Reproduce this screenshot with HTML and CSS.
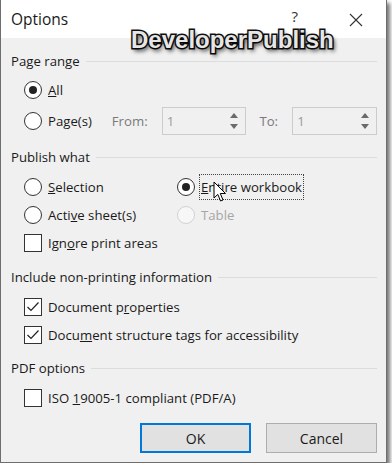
FILE: index.html
```html
<!DOCTYPE html>
<html lang="en">
<head>
  <meta charset="UTF-8" />
  <title>Options</title>
  <link rel="stylesheet" href="styles.css">
</head>
<body>

  <div class="dialog">
    <div class="titlebar">
      <span class="title">Options</span>
      <span class="help">?</span>
      <svg class="close" width="14" height="14" viewBox="0 0 14 14">
        <path d="M1 1 L13 13 M13 1 L1 13" stroke="#333" stroke-width="1.1" fill="none"/>
      </svg>
    </div>

    <div class="content">
      <!-- Page range -->
      <div class="group-label"><span>Page range</span><div class="line"></div></div>
      <div class="row r-all">
        <span class="radio checked"></span><span><u>A</u>ll</span>
      </div>
      <div class="row r-pages">
        <span class="radio"></span><span class="pages-text">Pa<u>g</u>e(s)</span>
        <span class="muted from">From:</span>
        <div class="spin"><span class="spin-val">1</span><div class="spin-btns"><span class="up"></span><span class="down"></span></div></div>
        <span class="muted to">To:</span>
        <div class="spin"><span class="spin-val">1</span><div class="spin-btns"><span class="up"></span><span class="down"></span></div></div>
      </div>

      <!-- Publish what -->
      <div class="group-label g-publish"><span>Publish what</span><div class="line"></div></div>
      <div class="grid">
        <div class="row"><span class="radio"></span><span><u>S</u>election</span></div>
        <div class="row"><span class="radio checked"></span><span class="focus"><u>E</u>ntire workbook</span></div>
        <div class="row"><span class="radio"></span><span>Acti<u>v</u>e sheet(s)</span></div>
        <div class="row disabled"><span class="radio"></span><span>Table</span></div>
      </div>
      <div class="row">
        <span class="check"></span><span>Ign<u>o</u>re print areas</span>
      </div>

      <!-- Include non-printing information -->
      <div class="group-label g-include"><span>Include non-printing information</span><div class="line"></div></div>
      <div class="row r-first">
        <span class="check on"><svg width="14" height="12" viewBox="0 0 14 12"><path d="M1.5 6 L5 9.5 L12.5 1.5" stroke="#222" stroke-width="1.2" fill="none"/></svg></span>
        <span>Document p<u>r</u>operties</span>
      </div>
      <div class="row">
        <span class="check on"><svg width="14" height="12" viewBox="0 0 14 12"><path d="M1.5 6 L5 9.5 L12.5 1.5" stroke="#222" stroke-width="1.2" fill="none"/></svg></span>
        <span>Docu<u>m</u>ent structure tags for accessibility</span>
      </div>

      <!-- PDF options -->
      <div class="group-label g-pdf"><span>PDF options</span><div class="line"></div></div>
      <div class="row r-first">
        <span class="check"></span><span>ISO <u>1</u>9005-1 compliant (PDF/A)</span>
      </div>

      <div class="buttons">
        <button class="btn default">OK</button>
        <button class="btn">Cancel</button>
      </div>
    </div>

    <div class="watermark">DeveloperPublish</div>
    <svg class="cursor" width="14" height="22" viewBox="0 0 14 22">
      <path d="M1 1 L1 17 L4.8 13.4 L7.6 20 L10 19 L7.3 12.5 L12.5 12.5 Z" fill="#fff" stroke="#000" stroke-width="1" stroke-linejoin="round"/>
    </svg>
  </div>

</body>
</html>
```

FILE: styles.css
```css
body {
  margin: 0;
  padding: 0;
  background: #ffffff;
  font-family: 'Open Sans', 'Noto Sans', sans-serif;
  color: #1a1a1a;
}

.dialog {
  position: relative;
  width: 385px;
  height: 462px;
  background-color: #f0f0f0;
  border: 1px solid #6e6e6e;
  border-top: none;
  box-shadow: 3px 3px 4px rgba(0, 0, 0, 0.55);
  overflow: visible;
}

.titlebar {
  height: 38px;
  background-color: #ffffff;
  display: flex;
  align-items: center;
  padding: 0 0 0 10px;
}

.title {
  font-size: 15.5px;
  flex: 1;
}

.help {
  font-size: 15px;
  color: #333;
  margin-right: 51px;
  margin-top: -6px;
}

.close {
  margin-right: 23px;
  margin-top: 2px;
}

.content {
  padding: 14px 9px 0 10px;
  font-size: 13.2px;
}

.group-label {
  height: 18px;
  display: flex;
  align-items: center;
}

.group-label .line {
  flex: 1;
  height: 1px;
  background-color: #dcdcdc;
  margin-left: 6px;
}

.g-publish { margin-top: 13px; }
.g-include { margin-top: 11px; }
.g-pdf { margin-top: 10px; }

.row {
  height: 28px;
  display: flex;
  align-items: center;
  padding-left: 13px;
}

.r-all { margin-top: 6px; }
.r-pages { margin-top: 3px; }
.r-first { margin-top: 7px; }

.radio {
  width: 16px;
  height: 16px;
  border: 1px solid #333;
  border-radius: 50%;
  background-color: #ffffff;
  margin-right: 6px;
  display: flex;
  align-items: center;
  justify-content: center;
  flex-shrink: 0;
}

.radio.checked::after {
  content: "";
  width: 8px;
  height: 8px;
  border-radius: 50%;
  background-color: #222;
}

.check {
  width: 16px;
  height: 16px;
  border: 1px solid #333;
  background-color: #ffffff;
  margin-right: 6px;
  display: flex;
  align-items: center;
  justify-content: center;
  flex-shrink: 0;
}

.pages-text { width: 64px; }

.muted { color: #7a7a7a; }
.from { width: 50px; }
.to { margin-left: 13px; width: 33px; }

.spin {
  width: 83px;
  height: 26px;
  border: 1px solid #cccccc;
  background-color: #f0f0f0;
  display: flex;
}

.spin-val {
  flex: 1;
  color: #9a9a9a;
  padding: 4px 0 0 4px;
}

.spin-btns {
  width: 23px;
  display: flex;
  flex-direction: column;
  align-items: center;
  justify-content: center;
  gap: 6px;
}

.spin-btns .up {
  width: 0;
  height: 0;
  border-left: 4px solid transparent;
  border-right: 4px solid transparent;
  border-bottom: 5px solid #6a6a6a;
}

.spin-btns .down {
  width: 0;
  height: 0;
  border-left: 4px solid transparent;
  border-right: 4px solid transparent;
  border-top: 5px solid #6a6a6a;
}

.grid {
  display: grid;
  grid-template-columns: 166px 1fr;
  margin-top: 7px;
}

.grid .row:nth-child(even) { padding-left: 0; }

.disabled { color: #a6a6a6; }
.disabled .radio {
  border-color: #d2d2d2;
  background-color: #f7f7f7;
}

.focus {
  outline: 1px dotted #444;
  outline-offset: 0;
  padding: 3px 1px;
  margin-left: -1px;
}

.buttons {
  display: flex;
  justify-content: flex-end;
  gap: 15px;
  margin-top: 11px;
}

.btn {
  width: 111px;
  height: 30px;
  font-family: 'Open Sans', 'Noto Sans', sans-serif;
  font-size: 14px;
  color: #1a1a1a;
  background-color: #e1e1e1;
  border: 1px solid #adadad;
}

.btn.default {
  border: 2px solid #0078d7;
}

.watermark {
  position: absolute;
  left: 130px;
  top: 26px;
  font-family: 'Liberation Sans', Arial, sans-serif;
  font-weight: bold;
  font-size: 24px;
  color: #e6e6e6;
  -webkit-text-stroke: 3px #111;
  paint-order: stroke fill;
  text-shadow: 2px 3px 4px rgba(0, 0, 0, 0.8);
}

.cursor {
  position: absolute;
  left: 212px;
  top: 181px;
}
```
